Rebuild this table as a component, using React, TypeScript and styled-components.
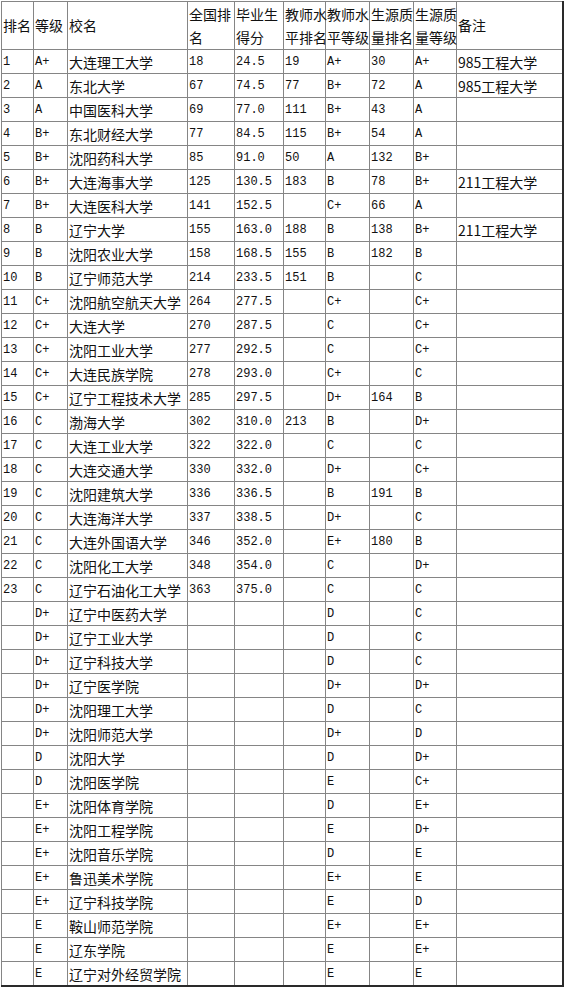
import React from 'react';
import styled, { createGlobalStyle } from 'styled-components';

type Row = [string, string, string, string, string, string, string, string, string, string];

const rows: Row[] = [
  ['1', 'A+', '大连理工大学', '18', '24.5', '19', 'A+', '30', 'A+', '985工程大学'],
  ['2', 'A', '东北大学', '67', '74.5', '77', 'B+', '72', 'A', '985工程大学'],
  ['3', 'A', '中国医科大学', '69', '77.0', '111', 'B+', '43', 'A', ''],
  ['4', 'B+', '东北财经大学', '77', '84.5', '115', 'B+', '54', 'A', ''],
  ['5', 'B+', '沈阳药科大学', '85', '91.0', '50', 'A', '132', 'B+', ''],
  ['6', 'B+', '大连海事大学', '125', '130.5', '183', 'B', '78', 'B+', '211工程大学'],
  ['7', 'B+', '大连医科大学', '141', '152.5', '', 'C+', '66', 'A', ''],
  ['8', 'B', '辽宁大学', '155', '163.0', '188', 'B', '138', 'B+', '211工程大学'],
  ['9', 'B', '沈阳农业大学', '158', '168.5', '155', 'B', '182', 'B', ''],
  ['10', 'B', '辽宁师范大学', '214', '233.5', '151', 'B', '', 'C', ''],
  ['11', 'C+', '沈阳航空航天大学', '264', '277.5', '', 'C+', '', 'C+', ''],
  ['12', 'C+', '大连大学', '270', '287.5', '', 'C', '', 'C+', ''],
  ['13', 'C+', '沈阳工业大学', '277', '292.5', '', 'C', '', 'C+', ''],
  ['14', 'C+', '大连民族学院', '278', '293.0', '', 'C+', '', 'C', ''],
  ['15', 'C+', '辽宁工程技术大学', '285', '297.5', '', 'D+', '164', 'B', ''],
  ['16', 'C', '渤海大学', '302', '310.0', '213', 'B', '', 'D+', ''],
  ['17', 'C', '大连工业大学', '322', '322.0', '', 'C', '', 'C', ''],
  ['18', 'C', '大连交通大学', '330', '332.0', '', 'D+', '', 'C+', ''],
  ['19', 'C', '沈阳建筑大学', '336', '336.5', '', 'B', '191', 'B', ''],
  ['20', 'C', '大连海洋大学', '337', '338.5', '', 'D+', '', 'C', ''],
  ['21', 'C', '大连外国语大学', '346', '352.0', '', 'E+', '180', 'B', ''],
  ['22', 'C', '沈阳化工大学', '348', '354.0', '', 'C', '', 'D+', ''],
  ['23', 'C', '辽宁石油化工大学', '363', '375.0', '', 'C', '', 'C', ''],
  ['', 'D+', '辽宁中医药大学', '', '', '', 'D', '', 'C', ''],
  ['', 'D+', '辽宁工业大学', '', '', '', 'D', '', 'C', ''],
  ['', 'D+', '辽宁科技大学', '', '', '', 'D', '', 'C', ''],
  ['', 'D+', '辽宁医学院', '', '', '', 'D+', '', 'D+', ''],
  ['', 'D+', '沈阳理工大学', '', '', '', 'D', '', 'C', ''],
  ['', 'D+', '沈阳师范大学', '', '', '', 'D+', '', 'D', ''],
  ['', 'D', '沈阳大学', '', '', '', 'D', '', 'D+', ''],
  ['', 'D', '沈阳医学院', '', '', '', 'E', '', 'C+', ''],
  ['', 'E+', '沈阳体育学院', '', '', '', 'D', '', 'E+', ''],
  ['', 'E+', '沈阳工程学院', '', '', '', 'E', '', 'D+', ''],
  ['', 'E+', '沈阳音乐学院', '', '', '', 'D', '', 'E', ''],
  ['', 'E+', '鲁迅美术学院', '', '', '', 'E+', '', 'E', ''],
  ['', 'E+', '辽宁科技学院', '', '', '', 'E', '', 'D', ''],
  ['', 'E', '鞍山师范学院', '', '', '', 'E+', '', 'E+', ''],
  ['', 'E', '辽东学院', '', '', '', 'E', '', 'E+', ''],
  ['', 'E', '辽宁对外经贸学院', '', '', '', 'E', '', 'E', ''],
];

const headers: string[][] = [
  ['排名'],
  ['等级'],
  ['校名'],
  ['全国排', '名'],
  ['毕业生', '得分'],
  ['教师水', '平排名'],
  ['教师水', '平等级'],
  ['生源质', '量排名'],
  ['生源质', '量等级'],
  ['备注'],
];

const widths = [32, 34, 120, 47, 49, 42, 44, 44, 43, 106];

// columns holding school names / remarks use the CJK face, the rest are ascii
const cjkColumns = new Set([2, 9]);

const GlobalStyle = createGlobalStyle`
  body {
    margin: 0;
    background: #fff;
  }
`;

const Page = styled.div`
  padding: 1px 0 0 1px;
`;

const Table = styled.table`
  border-collapse: collapse;
  table-layout: fixed;
  width: 561px;
  border-right: 2px solid #2a2a2a;
  border-bottom: 2px solid #2a2a2a;
  color: #111;
`;

const HeadCell = styled.th`
  height: 47px;
  padding: 0 0 0 1px;
  border: 1px solid #858585;
  text-align: left;
  vertical-align: middle;
  font-weight: normal;
  font-family: 'Noto Sans CJK SC', sans-serif;
  font-size: 14px;
  line-height: 23px;
  white-space: nowrap;
  overflow: visible;
`;

const Cell = styled.td<{ $cjk: boolean }>`
  height: 23px;
  padding: 0 0 0 1px;
  border: 1px solid #858585;
  vertical-align: middle;
  white-space: nowrap;
  overflow: visible;
  font-family: ${({ $cjk }) =>
    $cjk ? "'Noto Sans CJK SC', sans-serif" : "'Liberation Mono', 'Noto Sans CJK SC', monospace"};
  font-size: ${({ $cjk }) => ($cjk ? '14px' : '12px')};
  line-height: 18px;
`;

const App: React.FC = () => (
  <Page>
    <GlobalStyle />
    <Table>
      <colgroup>
        {widths.map((w, i) => (
          <col key={i} style={{ width: w }} />
        ))}
      </colgroup>
      <thead>
        <tr>
          {headers.map((lines, i) => (
            <HeadCell key={i}>
              {lines.map((l, j) => (
                <React.Fragment key={j}>
                  {j > 0 && <br />}
                  {l}
                </React.Fragment>
              ))}
            </HeadCell>
          ))}
        </tr>
      </thead>
      <tbody>
        {rows.map((row, r) => (
          <tr key={r}>
            {row.map((v, c) => (
              <Cell key={c} $cjk={cjkColumns.has(c)}>
                {v}
              </Cell>
            ))}
          </tr>
        ))}
      </tbody>
    </Table>
  </Page>
);

export default App;
